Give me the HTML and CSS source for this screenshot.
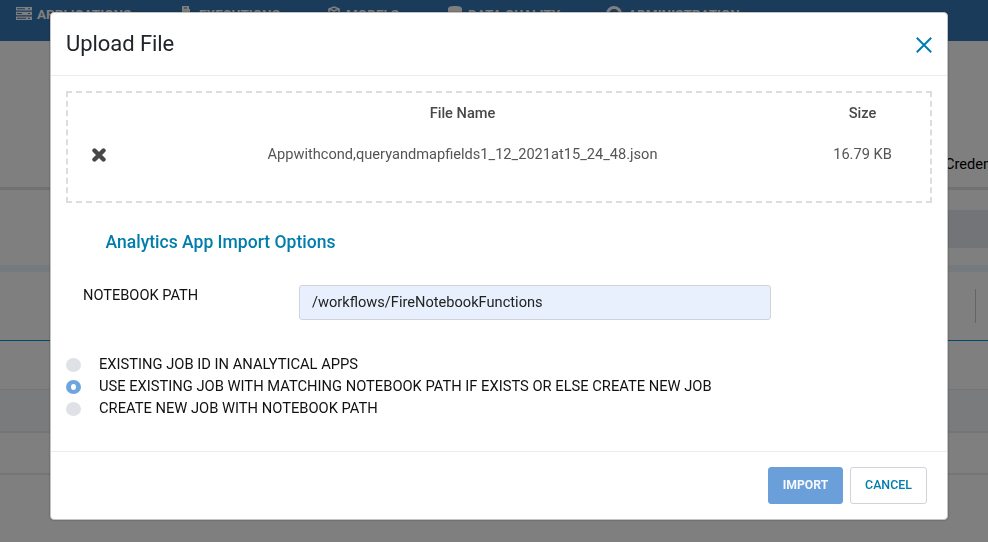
FILE: index.html
```html
<!DOCTYPE html>
<html lang="en">
<head>
<meta charset="utf-8">
<title>Upload File</title>
<link rel="stylesheet" href="styles.css">
</head>
<body>
<div class="page">
  <nav class="nav">
    <span class="nav-item nav-apps"><svg width="16" height="13" viewBox="0 0 16 13"><path fill="currentColor" fill-rule="evenodd" d="M0 0h16v3.5H0zM0 4.7h16v3.5H0zM0 9.4h16v3.6H0zM1 1.2v1h8v-1zM12 1.2v1h2v-1zM1 6v1h5V6zM12 6v1h2V6zM1 10.7v1h9v-1zM12 10.7v1h2v-1z"/></svg>APPLICATIONS</span>
    <span class="nav-item nav-exec"><svg width="10" height="14" viewBox="0 0 10 14"><path fill="currentColor" fill-rule="evenodd" d="M1 0h7v3h1v11H1zM3 1.500v1h3v-1z"/></svg>EXECUTIONS</span>
    <span class="nav-item nav-models"><svg width="12" height="14" viewBox="0 0 12 14"><path fill="none" stroke="currentColor" stroke-width="1.600" d="M6 1l5 2v7l-5 3-5-3V3zM1 3l5 2 5-2M6 5v8"/></svg>MODELS</span>
    <span class="nav-item nav-quality"><svg width="14" height="14" viewBox="0 0 14 14"><path fill="currentColor" d="M0 2.500C0-.8 14-.8 14 2.500v9c0 3.300-14 3.300-14 0z"/></svg>DATA QUALITY</span>
    <span class="nav-item nav-admin"><svg width="16" height="16" viewBox="0 0 16 16"><circle cx="8" cy="8" r="6.500" fill="none" stroke="currentColor" stroke-width="3"/></svg>ADMINISTRATION</span>
  </nav>
  <div class="tabs"><span class="tab">Credentials</span></div>
  <div class="toolbar"><div class="toolbar-fill"></div></div>
  <div class="table-head"><span class="divider"></span></div>
  <div class="row row-first"></div>
  <div class="row row-shaded"></div>
  <div class="row row-last"></div>
</div>
<div class="overlay">
  <section class="modal">
    <header class="modal-header">
      <h1 class="title">Upload File</h1>
      <svg class="close" width="16" height="16" viewBox="0 0 16 16"><path d="M.8.8l14.400 14.400M15.200.8L.8 15.200" fill="none" stroke="currentColor" stroke-width="2"/></svg>
    </header>
    <div class="modal-body">
      <div class="files">
        <div class="files-row files-head"><span></span><span>File Name</span><span>Size</span></div>
        <div class="files-row files-data"><span class="remove"><svg width="14" height="14" viewBox="0 0 14 14"><path d="M2.500 2.500l9 9M11.500 2.500l-9 9" fill="none" stroke="currentColor" stroke-width="4.400" stroke-linecap="round"/></svg></span><span class="file-name">Appwithcond,queryandmapfields1_12_2021at15_24_48.json</span><span class="file-size">16.79 KB</span></div>
      </div>
      <h2 class="subtitle">Analytics App Import Options</h2>
      <div class="field"><span class="field-label">NOTEBOOK PATH</span><div class="field-input"><span class="path">/workflows/FireNotebookFunctions</span></div></div>
      <div class="options">
        <div class="option"><i class="radio"></i><span class="opt1">EXISTING JOB ID IN ANALYTICAL APPS</span></div>
        <div class="option"><i class="radio radio-on"></i><span class="opt2">USE EXISTING JOB WITH MATCHING NOTEBOOK PATH IF EXISTS OR ELSE CREATE NEW JOB</span></div>
        <div class="option"><i class="radio"></i><span class="opt3">CREATE NEW JOB WITH NOTEBOOK PATH</span></div>
      </div>
    </div>
    <footer class="modal-footer"><div class="btn btn-import">IMPORT</div><div class="btn btn-cancel">CANCEL</div></footer>
  </section>
</div>
</body>
</html>
```
FILE: styles.css
```css
* { box-sizing: border-box; }
body { margin: 0; width: 988px; height: 542px; overflow: hidden; font-family: Roboto, sans-serif; background: #fff; }
svg { display: block; flex: none; }
.page { height: 542px; overflow: hidden; }
.nav { height: 41px; background: #3776b4; color: #fff; display: grid; grid-template-columns: 165px 147px 120px 158px auto; padding: 7px 0 0 16px; font-size: 13.500px; font-weight: 700; line-height: 15px; }
.nav-item { display: flex; align-items: flex-start; gap: 6px; white-space: nowrap; }
.nav-item svg { margin-top: -1px; }
.nav-apps { gap: 5px; }
.nav-apps svg { margin-top: 0; }
.nav-exec svg { margin-right: 2px; }
.tabs { height: 149px; border-bottom: 3px solid #e2e2e2; display: flex; justify-content: flex-end; align-items: flex-end; padding-bottom: 13px; }
.tab { width: 43px; font-size: 14.600px; line-height: 20px; color: #000; white-space: nowrap; }
.toolbar { height: 82px; padding-top: 20px; border-bottom: 7px solid #eaf5fd; display: flex; justify-content: flex-end; }
.toolbar-fill { width: 60px; height: 38px; background: #e4e8ee; }
.table-head { height: 69px; border-bottom: 1px solid #0092dc; padding: 17px 12px 0 0; display: flex; justify-content: flex-end; }
.divider { width: 1px; height: 34px; background: #c8c8c4; }
.row { border-bottom: 2px solid #eaebed; }
.row-first { height: 49px; border-bottom-width: 1px; }
.row-shaded { height: 43px; background: #f3f6fa; }
.row-last { height: 42px; }
.overlay { position: fixed; inset: 0; background: rgba(0, 0, 0, .5); display: flex; justify-content: center; align-items: flex-start; padding: 12px 0 0 10px; }
.modal { width: 898px; height: 508px; background: #fff; border: 1px solid #c4c4c4; border-radius: 4px; box-shadow: 0 0 2px rgba(0, 0, 0, .4); display: flex; flex-direction: column; }
.modal-header { height: 63px; border-bottom: 1px solid #e9ecef; display: flex; justify-content: space-between; padding: 15px 15px 0; }
.title { margin: 0; font-size: 22px; line-height: 32px; font-weight: 400; letter-spacing: -.06px; color: #212529; }
.close { color: #007dad; margin-top: 9px; }
.modal-body { height: 375px; padding: 15px 15px 0; }
.files { width: 866px; height: 112px; border: 2px dashed #ddd; padding-top: 10px; font-size: 14.620px; }
.files-row { display: grid; grid-template-columns: 62px 665px 135px; text-align: center; line-height: 20px; }
.files-head { font-weight: 500; color: #484848; }
.files-data { margin-top: 21px; color: #555; }
.remove { display: flex; justify-content: center; padding-top: 4px; color: #484848; }
.subtitle { margin: 27px 0 0 39.500px; font-size: 17.550px; line-height: 24px; font-weight: 500; color: #007dad; }
.field { margin-top: 31px; display: flex; padding-left: 17px; }
.field-label { width: 216px; font-size: 14.600px; line-height: 20px; color: #111; }
.field-input { width: 472px; height: 35px; border: 1px solid #ced4da; border-radius: 3px; background: #e8f0fe; padding: 6px 12px; font-size: 14.620px; line-height: 20px; color: #222; }
.options { margin-top: 33px; }
.option { height: 22px; display: flex; align-items: center; gap: 18px; font-size: 14.710px; line-height: 22px; color: #111; white-space: nowrap; }
.radio { width: 15px; height: 14px; border-radius: 50%; background: #dee2e6; margin-top: 2px; }
.radio-on { border: 5px solid #6da6df; border-width: 4.500px 5px; background: #fff; }
.modal-footer { border-top: 1px solid #e9ecef; flex: 1; display: flex; justify-content: flex-end; gap: 7px; padding: 15px 20px 0; }
.btn { height: 37px; border-radius: 3px; font-size: 12px; line-height: 35px; text-align: center; border: 1px solid #ced4da; }
.btn-import { width: 75px; background: #6a9fda; border-color: #6a9fda; color: #f5f9ff; font-weight: 700; font-size: 12.200px; }
.btn-cancel { width: 77px; color: #007dad; font-weight: 500; font-size: 12.400px; line-height: 33px; }
```
